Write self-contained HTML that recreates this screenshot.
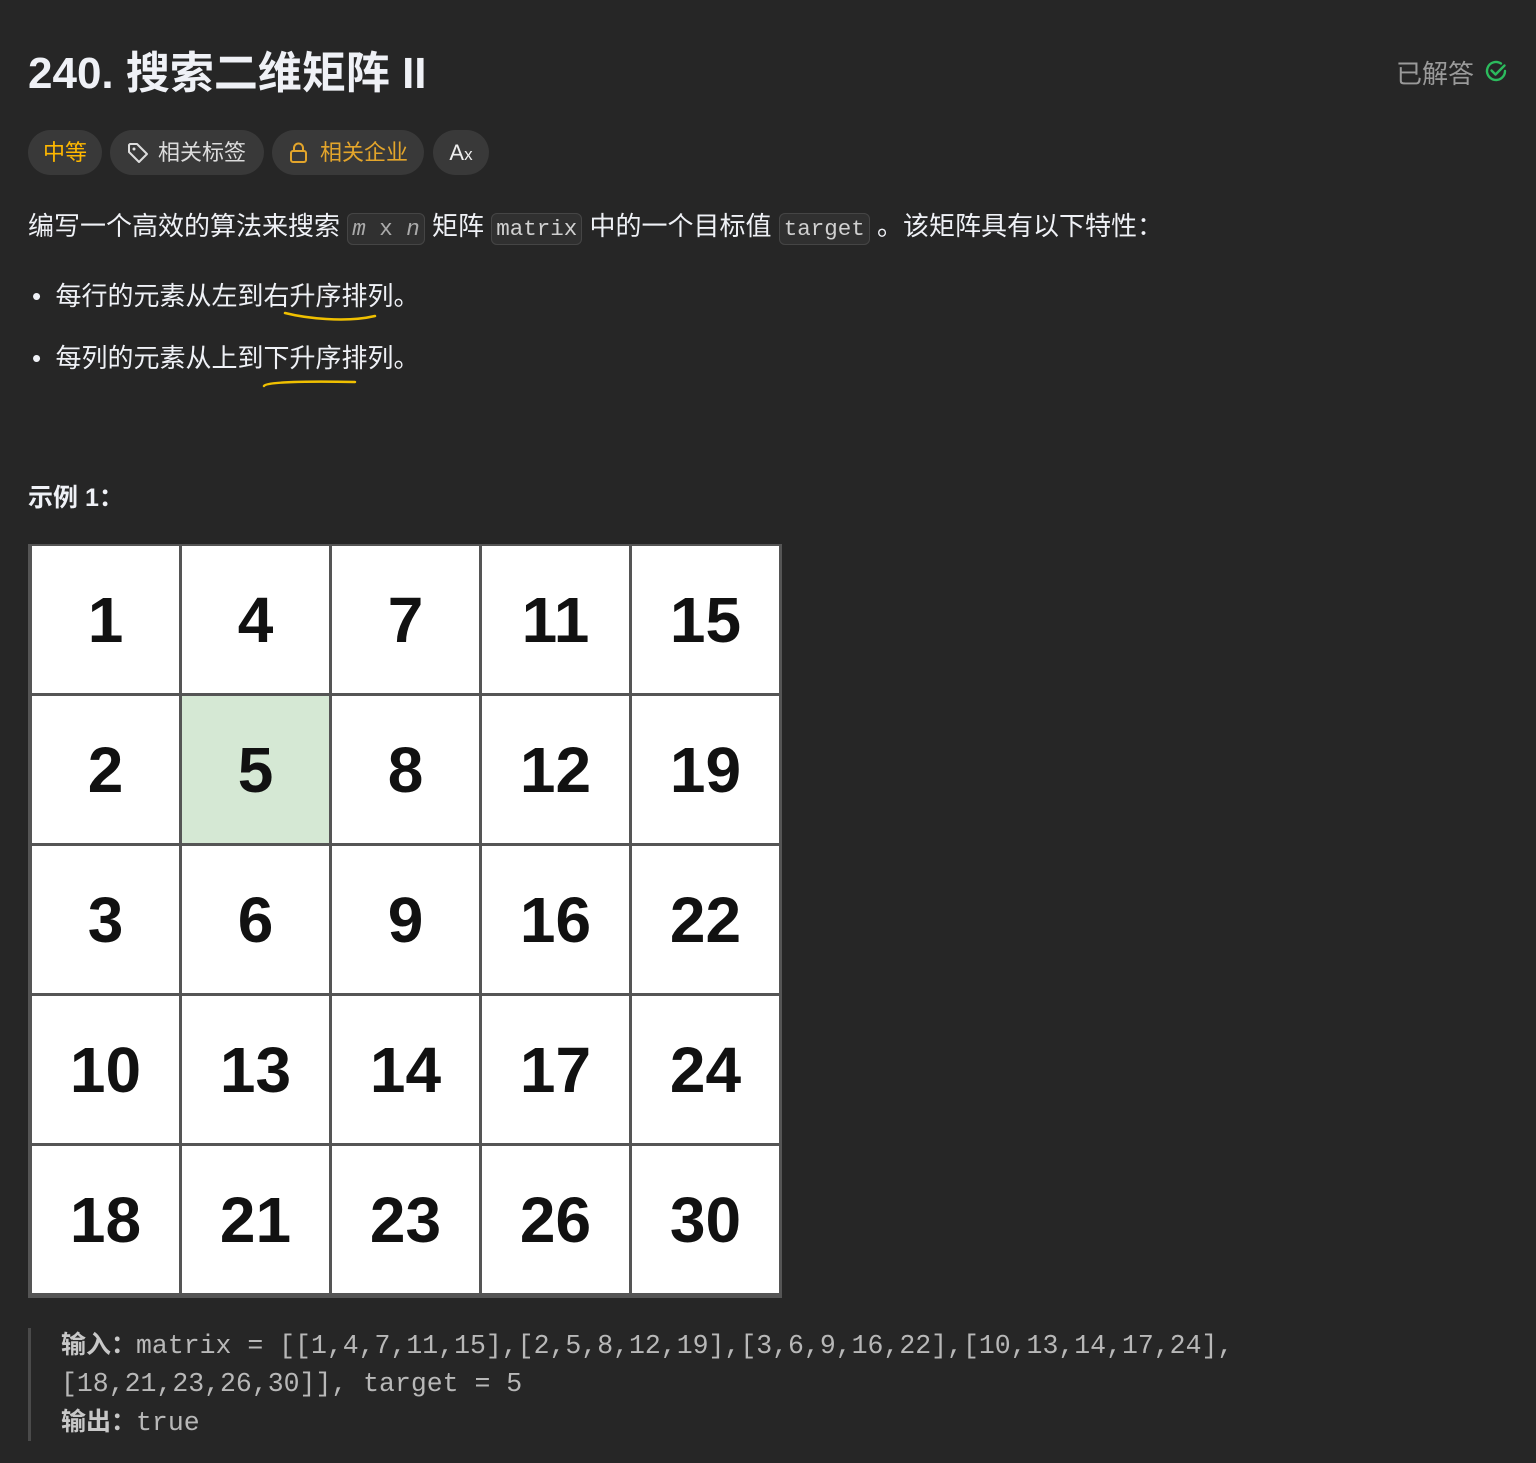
<!DOCTYPE html>
<html><head><meta charset="utf-8"><style>
body{margin:0;width:1536px;height:1463px;background:#262626;font-family:"Liberation Sans","Noto Sans CJK SC",sans-serif;color:#eff1f6;position:relative;overflow:hidden}
.a{position:absolute;white-space:nowrap}
.pill{position:absolute;top:130px;height:45px;border-radius:23px;background:#393939;font-size:22px;line-height:45px;text-align:center}
code{font-family:"Liberation Mono",monospace;font-size:22.5px;background:#303030;border:1px solid #454545;border-radius:6px;padding:2px 4px;color:#d0d0d0}
.grid{position:absolute;left:28px;top:544px;width:754px;height:754px;background:#555;display:grid;grid-template-columns:repeat(5,147px);grid-auto-rows:147px;gap:3px;padding:2px 0 0 4px;box-sizing:border-box}
.grid div{background:#fff;color:#111;font:bold 64px "Liberation Sans",sans-serif;display:flex;align-items:center;justify-content:center}
.pre{font-family:"Liberation Mono","Noto Sans CJK SC",monospace;font-size:26.5px;color:#b8b8b8;line-height:38px}
.pre b{font-family:"Liberation Sans","Noto Sans CJK SC",sans-serif;font-size:25px;color:#c8c8c8}
</style></head><body>
<div class="a" style="left:28px;top:44px;font-size:44px;font-weight:bold;line-height:60px">240. 搜索二维矩阵 II</div>
<div class="a" style="left:1396px;top:54px;font-size:26px;color:#9a9a9a">已解答</div>
<svg class="a" style="left:1483px;top:58px" width="26" height="26" viewBox="0 0 26 26"><path d="M22 13a9 9 0 1 1-4-7.5" fill="none" stroke="#2cbb5d" stroke-width="2.4" stroke-linecap="round"/><path d="M8.5 12.5l4 4 9-9" fill="none" stroke="#2cbb5d" stroke-width="2.4" stroke-linecap="round" stroke-linejoin="round"/></svg>
<div class="pill" style="left:28px;width:74px;color:#ffb800">中等</div>
<div class="pill" style="left:110px;width:154px;color:#dcdcdc;text-align:left"><svg style="position:absolute;left:16px;top:11px" width="24" height="24" viewBox="0 0 24 24"><path d="M3 4v7l10 10 8-8L11 3H4z" fill="none" stroke="#ddd" stroke-width="2" stroke-linejoin="round"/><circle cx="8" cy="8" r="1.5" fill="#ddd"/></svg><span style="position:absolute;left:48px">相关标签</span></div>
<div class="pill" style="left:272px;width:152px;color:#e3a52b;text-align:left"><svg style="position:absolute;left:16px;top:11px" width="22" height="24" viewBox="0 0 22 24"><rect x="3" y="10" width="15" height="11" rx="2" fill="none" stroke="#e3a52b" stroke-width="2"/><path d="M6 10V7a4.5 4.5 0 0 1 9 0v3" fill="none" stroke="#e3a52b" stroke-width="2"/></svg><span style="position:absolute;left:48px">相关企业</span></div>
<div class="pill" style="left:433px;width:56px;color:#eee;font-size:22px">A<span style="font-size:17px">x</span></div>
<div class="a" style="left:28px;top:208px;font-size:26px;line-height:36px">编写一个高效的算法来搜索 <code style="color:#aaa"><i>m</i> x <i>n</i></code> 矩阵 <code>matrix</code> 中的一个目标值 <code>target</code> 。该矩阵具有以下特性：</div>
<div class="a" style="left:32px;top:278px;font-size:26px;line-height:36px">•&nbsp; 每行的元素从左到右升序排列。</div>
<div class="a" style="left:32px;top:340px;font-size:26px;line-height:36px">•&nbsp; 每列的元素从上到下升序排列。</div>
<svg class="a" style="left:0;top:0" width="420" height="400"><path d="M285 313c20 5 60 10 90 3" fill="none" stroke="#f0c000" stroke-width="2.5" stroke-linecap="round"/><path d="M264 386c2-4 40-5 91-4" fill="none" stroke="#f0c000" stroke-width="2.5" stroke-linecap="round"/></svg>
<div class="a" style="left:28px;top:478px;font-size:25px;font-weight:bold">示例 1：</div>
<div class="grid">
<div>1</div><div>4</div><div>7</div><div>11</div><div>15</div>
<div>2</div><div style="background:#d5e8d4">5</div><div>8</div><div>12</div><div>19</div>
<div>3</div><div>6</div><div>9</div><div>16</div><div>22</div>
<div>10</div><div>13</div><div>14</div><div>17</div><div>24</div>
<div>18</div><div>21</div><div>23</div><div>26</div><div>30</div>
</div>
<div class="a" style="left:28px;top:1328px;width:3px;height:113px;background:#4a4a4a"></div>
<div class="a pre" style="left:61px;top:1326px"><b>输入：</b>matrix = [[1,4,7,11,15],[2,5,8,12,19],[3,6,9,16,22],[10,13,14,17,24],<br>[18,21,23,26,30]], target = 5<br><b>输出：</b>true</div>
</body></html>
